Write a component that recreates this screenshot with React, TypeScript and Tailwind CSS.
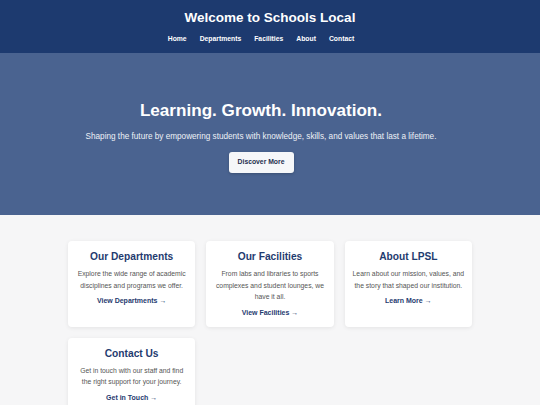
import React from 'react';

const NAV = ['Home', 'Departments', 'Facilities', 'About', 'Contact'];

const CARDS = [
  {
    title: 'Our Departments',
    text: 'Explore the wide range of academic disciplines and programs we offer.',
    link: 'View Departments',
  },
  {
    title: 'Our Facilities',
    text: 'From labs and libraries to sports complexes and student lounges, we have it all.',
    link: 'View Facilities',
  },
  {
    title: 'About LPSL',
    text: 'Learn about our mission, values, and the story that shaped our institution.',
    link: 'Learn More',
  },
  {
    title: 'Contact Us',
    text: 'Get in touch with our staff and find the right support for your journey.',
    link: 'Get in Touch',
  },
];

function Card({ title, text, link }: { title: string; text: string; link: string }) {
  return (
    <div className="flex flex-col items-center rounded-[4px] bg-white px-[7px] pt-[10px] pb-[9px] text-center shadow-[0_1px_4px_rgba(0,0,0,0.08)]">
      <h3 className="text-[10.2px] font-bold leading-[12px] text-[#1f3b6f]">{title}</h3>
      <p className="mt-[5px] text-[6.8px] leading-[11.5px] text-[#555]">{text}</p>
      <a className="mt-[5px] text-[7px] font-bold leading-[10px] text-[#1f3b6f]" href="#">
        {link} →
      </a>
    </div>
  );
}

export default function App() {
  return (
    <div className="min-h-[405px] bg-[#f6f6f7] font-['Liberation_Sans',Arial,sans-serif]">
      <header className="bg-[#1d3a6f] pt-[10px] pb-[9px] text-center text-white">
        <h1 className="text-[13.5px] font-bold leading-[16px]">Welcome to Schools Local</h1>
        <nav className="mt-[8px] flex justify-center gap-[13px] pr-[18px] text-[6.8px] font-bold leading-[10px]">
          {NAV.map((n) => (
            <a key={n} href="#">
              {n}
            </a>
          ))}
        </nav>
      </header>

      <section className="flex h-[162px] flex-col items-center bg-[#4a6390] pt-[48px] pr-[18px] text-center text-white">
        <h2 className="text-[17.1px] font-bold leading-[20px]">Learning. Growth. Innovation.</h2>
        <p className="mt-[10px] text-[8.2px] leading-[12px] text-[#eef1f6]">
          Shaping the future by empowering students with knowledge, skills, and values that last a lifetime.
        </p>
        <button className="mt-[9px] h-[21px] w-[65px] rounded-[3px] bg-[#f6f7f9] text-[6.8px] font-bold text-[#1f2f4f] shadow-[0_1px_3px_rgba(0,0,0,0.2)]">
          Discover More
        </button>
      </section>

      <main className="pt-[26px] pb-[20px]">
        <div className="mx-auto grid w-[404px] grid-cols-3 gap-[11px]">
          {CARDS.map((c) => (
            <Card key={c.title} {...c} />
          ))}
        </div>
      </main>
    </div>
  );
}
